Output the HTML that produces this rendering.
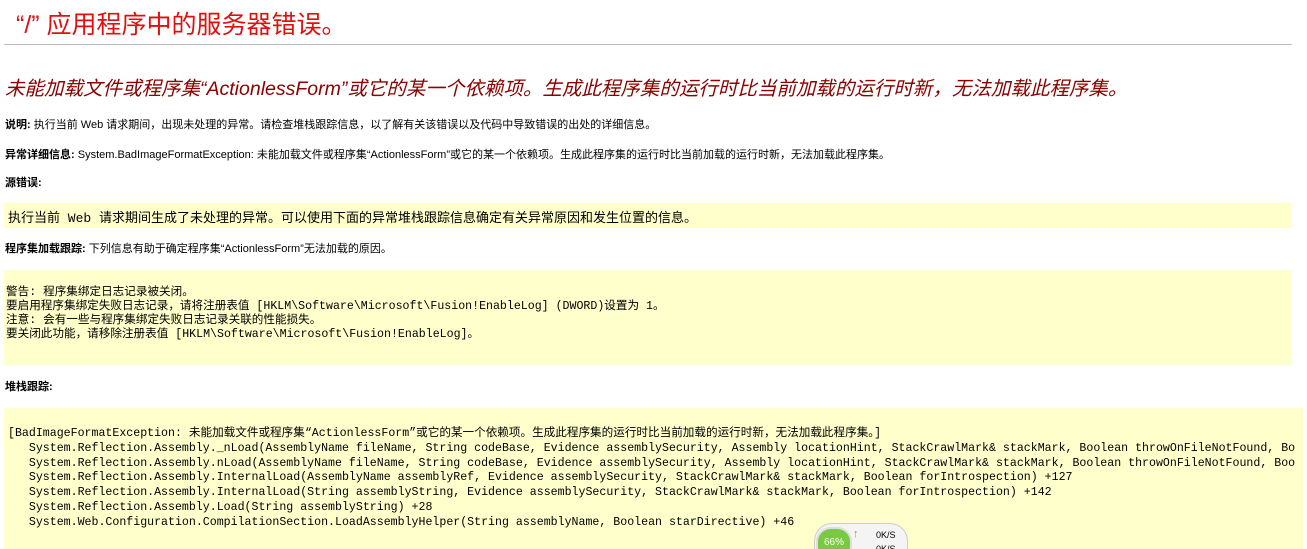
<!DOCTYPE html>
<html><head><meta charset="utf-8"><style>
html,body{margin:0;overflow:hidden;height:549px}
body{background:#fff;font-family:"Liberation Sans","Noto Sans CJK SC",sans-serif;color:#000;width:1307px;position:relative}
.a{position:absolute;white-space:nowrap}
h1{position:absolute;left:16px;top:5px;margin:0;font-size:25px;font-weight:normal;color:#e01010;white-space:nowrap}
hr{position:absolute;left:4px;top:44px;width:1288px;margin:0;border:0;border-top:1px solid #bbb}
h2{position:absolute;left:5px;top:72px;margin:0;font-size:19.5px;font-weight:normal;font-style:italic;color:#8b0000;white-space:nowrap}
.s{font-size:11px;left:5px}
.box{position:absolute;left:4px;background:#ffffcc;width:1288px}
pre{margin:0;font-family:"Liberation Mono","Noto Sans CJK SC",monospace;font-size:11.6px;white-space:pre}
</style></head><body>
<h1>“/” 应用程序中的服务器错误。</h1>
<hr>
<h2>未能加载文件或程序集“ActionlessForm”或它的某一个依赖项。生成此程序集的运行时比当前加载的运行时新，无法加载此程序集。</h2>
<div class="a s" style="top:116px"><b>说明:</b> 执行当前 Web 请求期间，出现未处理的异常。请检查堆栈跟踪信息，以了解有关该错误以及代码中导致错误的出处的详细信息。</div>
<div class="a s" style="top:146px"><b>异常详细信息:</b> System.BadImageFormatException: 未能加载文件或程序集“ActionlessForm”或它的某一个依赖项。生成此程序集的运行时比当前加载的运行时新，无法加载此程序集。</div>
<div class="a s" style="top:174px"><b>源错误:</b></div>
<div class="box" style="top:203px;height:25px"><pre style="position:absolute;left:4px;top:4px;font-size:13px">执行当前 Web 请求期间生成了未处理的异常。可以使用下面的异常堆栈跟踪信息确定有关异常原因和发生位置的信息。</pre></div>
<div class="a s" style="top:240px"><b>程序集加载跟踪:</b> 下列信息有助于确定程序集“ActionlessForm”无法加载的原因。</div>
<div class="box" style="top:270px;height:95px"><pre style="position:absolute;left:2px;top:16px;line-height:14px">警告: 程序集绑定日志记录被关闭。
要启用程序集绑定失败日志记录，请将注册表值 [HKLM\Software\Microsoft\Fusion!EnableLog] (DWORD)设置为 1。
注意: 会有一些与程序集绑定失败日志记录关联的性能损失。
要关闭此功能，请移除注册表值 [HKLM\Software\Microsoft\Fusion!EnableLog]。</pre></div>
<div class="a s" style="top:378px"><b>堆栈跟踪:</b></div>
<div class="box" style="top:408px;height:141px;width:1299px"><pre style="position:absolute;left:4px;top:19px;line-height:14.8px">[BadImageFormatException: 未能加载文件或程序集“ActionlessForm”或它的某一个依赖项。生成此程序集的运行时比当前加载的运行时新，无法加载此程序集。]
   System.Reflection.Assembly._nLoad(AssemblyName fileName, String codeBase, Evidence assemblySecurity, Assembly locationHint, StackCrawlMark&amp; stackMark, Boolean throwOnFileNotFound, Bo
   System.Reflection.Assembly.nLoad(AssemblyName fileName, String codeBase, Evidence assemblySecurity, Assembly locationHint, StackCrawlMark&amp; stackMark, Boolean throwOnFileNotFound, Boo
   System.Reflection.Assembly.InternalLoad(AssemblyName assemblyRef, Evidence assemblySecurity, StackCrawlMark&amp; stackMark, Boolean forIntrospection) +127
   System.Reflection.Assembly.InternalLoad(String assemblyString, Evidence assemblySecurity, StackCrawlMark&amp; stackMark, Boolean forIntrospection) +142
   System.Reflection.Assembly.Load(String assemblyString) +28
   System.Web.Configuration.CompilationSection.LoadAssemblyHelper(String assemblyName, Boolean starDirective) +46</pre></div>
<div style="position:absolute;left:814px;top:523px;width:92px;height:26px;border-radius:18px 18px 0 0;background:#f4f4f4;border:1px solid #ccc;border-bottom:0"></div>
<div style="position:absolute;left:816px;top:527px;width:32px;height:30px;border-radius:15px;background:#7ac943;color:#fff;font-size:10px;text-align:center;line-height:28px;border:2px solid #ddd">66%</div>
<div class="a" style="left:853px;top:528px;font-size:11px;color:#f07020;font-weight:bold">↑</div>
<div class="a" style="left:876px;top:530px;font-size:9px">0K/S</div>
<div class="a" style="left:876px;top:544px;font-size:9px">0K/S</div>
</body></html>
